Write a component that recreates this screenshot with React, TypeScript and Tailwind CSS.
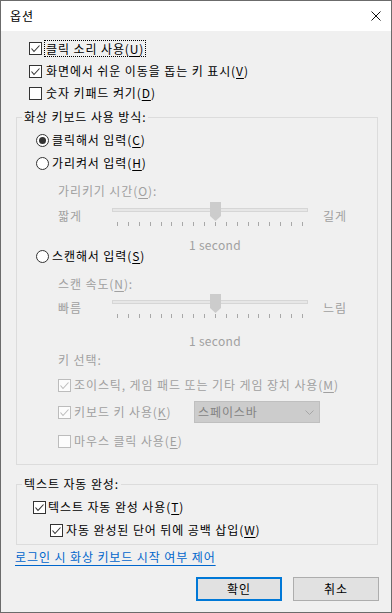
import React from "react";

const FONT = { fontFamily: '"Noto Sans CJK KR", "Noto Sans", sans-serif' };

function CheckBox({ checked, disabled }: { checked?: boolean; disabled?: boolean }) {
  const c = disabled ? "#bcbcbc" : "#333333";
  return (
    <div
      className={`w-[13px] h-[13px] shrink-0 border ${disabled ? "border-[#bcbcbc] bg-[#fcfcfc]" : "border-[#333333] bg-white"}`}
    >
      {checked && (
        <svg width="11" height="11" viewBox="0 0 11 11" className="block">
          <polyline points="1.5,5.5 4,8.5 9.5,2.5" fill="none" stroke={c} strokeWidth="1.1" />
        </svg>
      )}
    </div>
  );
}

function Radio({ checked }: { checked?: boolean }) {
  return (
    <div className="w-[13px] h-[13px] shrink-0 rounded-full border border-[#333333] bg-white flex items-center justify-center">
      {checked && <div className="w-[7px] h-[7px] rounded-full bg-[#333333]" />}
    </div>
  );
}

function SliderGraphic() {
  const ticks = Array.from({ length: 18 }, (_, i) => Math.round(5 + i * 10.88) + 0.5);
  return (
    <svg width="196" height="30" viewBox="0 0 196 30" className="block shrink-0">
      <rect x="0.5" y="8.5" width="195" height="3" fill="#e7e7e7" stroke="#d6d6d6" />
      {ticks.map((x, i) => (
        <line key={i} x1={x} y1="22" x2={x} y2="26" stroke="#a8a8a8" strokeWidth="1" />
      ))}
      <path d="M98,2 H109 V16 L103.5,21 L98,16 Z" fill="#cccccc" />
    </svg>
  );
}

function SliderRow({ left, right }: { left: string; right: string }) {
  return (
    <div className="h-[30px] flex items-center">
      <div className="ml-[41px] w-[54px] text-[#a0a0a0] pt-[2px]">{left}</div>
      <SliderGraphic />
      <div className="ml-[15px] text-[#a0a0a0] pt-[2px]">{right}</div>
    </div>
  );
}

function U({ children }: { children: React.ReactNode }) {
  return <span className="underline underline-offset-[2px]">{children}</span>;
}

export default function App() {
  return (
    <div
      style={FONT}
      className="w-[392px] h-[613px] border border-[#6b6b6b] bg-[#f0f0f0] flex flex-col text-[12px] leading-[16px] tracking-[0.9px] text-black overflow-hidden"
    >
      {/* Title bar */}
      <div className="h-[30px] bg-white flex items-center justify-between pl-[9px] pr-[10px] shrink-0">
        <span className="text-[12px]">옵션</span>
        <svg width="10" height="10" viewBox="0 0 10 10" className="block">
          <path d="M0.5,0.5 L9.5,9.5 M9.5,0.5 L0.5,9.5" stroke="#111" strokeWidth="1" />
        </svg>
      </div>

      {/* Body */}
      <div className="flex flex-col flex-1">
        <div className="h-[6px]" />
        <div className="h-[23px] flex items-center">
          <div className="ml-[28px]">
            <CheckBox checked />
          </div>
          <span className="ml-[2px] h-[17px] px-[1px] border border-dotted border-black flex items-center">
            클릭 소리 사용(<U>U</U>)
          </span>
        </div>
        <div className="h-[22px] flex items-center">
          <div className="ml-[28px]">
            <CheckBox checked />
          </div>
          <span className="ml-[4px]">
            화면에서 쉬운 이동을 돕는 키 표시(<U>V</U>)
          </span>
        </div>
        <div className="h-[22px] flex items-center">
          <div className="ml-[28px]">
            <CheckBox />
          </div>
          <span className="ml-[4px]">
            숫자 키패드 켜기(<U>D</U>)
          </span>
        </div>
        <div className="h-[13px]" />

        {/* Group 1 */}
        <div className="relative ml-[15px] w-[362px] h-[348px] border border-[#dcdcdc] flex flex-col shrink-0">
          <span className="absolute left-[5px] top-[-9px] px-[2px] bg-[#f0f0f0] leading-[16px]">
            화상 키보드 사용 방식:
          </span>
          <div className="h-[11px]" />
          <div className="h-[22px] flex items-center">
            <div className="ml-[19px]">
              <Radio checked />
            </div>
            <span className="ml-[3px]">
              클릭해서 입력(<U>C</U>)
            </span>
          </div>
          <div className="h-[24px] flex items-center">
            <div className="ml-[19px]">
              <Radio />
            </div>
            <span className="ml-[3px]">
              가리켜서 입력(<U>H</U>)
            </span>
          </div>
          <div className="h-[6px]" />
          <div className="h-[19px] flex items-center">
            <span className="ml-[41px] text-[#a0a0a0]">
              가리키기 시간(<U>O</U>):
            </span>
          </div>
          <SliderRow left="짧게" right="길게" />
          <div className="h-[8px]" />
          <div className="h-[14px] flex items-center">
            <span className="ml-[172px] text-[#a0a0a0] tracking-[0.3px]">1 second</span>
          </div>
          <div className="h-[8px] flex items-center">
            <div className="ml-[19px]">
              <Radio />
            </div>
            <span className="ml-[3px]">
              스캔해서 입력(<U>S</U>)
            </span>
          </div>
          <div className="h-[15px]" />
          <div className="h-[17px] flex items-center">
            <span className="ml-[41px] text-[#a0a0a0]">
              스캔 속도(<U>N</U>):
            </span>
          </div>
          <SliderRow left="빠름" right="느림" />
          <div className="h-[12px]" />
          <div className="h-[14px] flex items-center">
            <span className="ml-[172px] text-[#a0a0a0] tracking-[0.3px]">1 second</span>
          </div>
          <div className="h-[24px] flex items-center">
            <span className="ml-[41px] text-[#a0a0a0]">키 선택:</span>
          </div>
          <div className="h-[26px] flex items-center">
            <div className="ml-[41px]">
              <CheckBox checked disabled />
            </div>
            <span className="ml-[3px] text-[#a0a0a0]">
              조이스틱, 게임 패드 또는 기타 게임 장치 사용(<U>M</U>)
            </span>
          </div>
          <div className="h-[28px] flex items-center">
            <div className="ml-[41px]">
              <CheckBox checked disabled />
            </div>
            <span className="ml-[3px] w-[120px] text-[#a0a0a0]">
              키보드 키 사용(<U>K</U>)
            </span>
            <div className="w-[126px] h-[22px] bg-[#cccccc] border border-[#bfbfbf] flex items-center justify-between pl-[3px] pr-[5px]">
              <span className="text-[#838383]">스페이스바</span>
              <svg width="9" height="5" viewBox="0 0 9 5" className="block">
                <polyline points="0.5,0.5 4.5,4.5 8.5,0.5" fill="none" stroke="#a6a6a6" strokeWidth="1" />
              </svg>
            </div>
          </div>
          <div className="h-[30px] flex items-center">
            <div className="ml-[41px]">
              <CheckBox disabled />
            </div>
            <span className="ml-[3px] text-[#a0a0a0]">
              마우스 클릭 사용(<U>E</U>)
            </span>
          </div>
        </div>

        <div className="h-[19px]" />

        {/* Group 2 */}
        <div className="relative ml-[15px] w-[362px] h-[61px] border border-[#dcdcdc] flex flex-col shrink-0">
          <span className="absolute left-[5px] top-[-9px] px-[2px] bg-[#f0f0f0] leading-[16px]">
            텍스트 자동 완성:
          </span>
          <div className="h-[11px]" />
          <div className="h-[22px] flex items-center">
            <div className="ml-[16px]">
              <CheckBox checked />
            </div>
            <span className="ml-[2px]">
              텍스트 자동 완성 사용(<U>T</U>)
            </span>
          </div>
          <div className="h-[24px] flex items-center">
            <div className="ml-[33px]">
              <CheckBox checked />
            </div>
            <span className="ml-[3px]">
              자동 완성된 단어 뒤에 공백 삽입(<U>W</U>)
            </span>
          </div>
        </div>

        <div className="h-[24px] flex items-center shrink-0">
          <span className="ml-[14px] text-[#0066cc] underline underline-offset-[3px]">
            로그인 시 화상 키보드 시작 여부 제어
          </span>
        </div>
        <div className="h-[8px]" />
        <div className="h-[24px] flex justify-end pr-[12px] gap-[11px] shrink-0">
          <div className="w-[86px] h-[24px] bg-[#e1e1e1] border-2 border-[#0078d7] flex items-center justify-center">
            확인
          </div>
          <div className="w-[86px] h-[24px] bg-[#e1e1e1] border border-[#adadad] flex items-center justify-center">
            취소
          </div>
        </div>
      </div>
    </div>
  );
}
